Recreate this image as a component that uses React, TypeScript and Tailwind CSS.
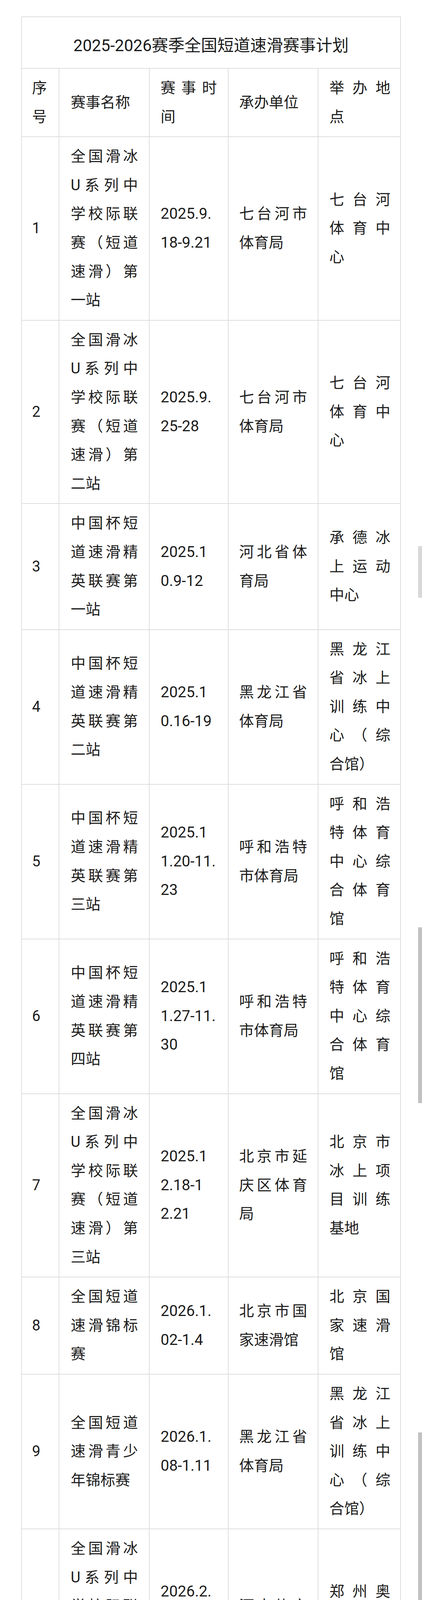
type Row = {
  no: string[];
  name: string[];
  date: string[];
  host: string[];
  place: string[];
};

const rows: Row[] = [
  {
    no: ["1"],
    name: ["全国滑冰", "U系列中", "学校际联", "赛（短道", "速滑）第", "一站"],
    date: ["2025.9.", "18-9.21"],
    host: ["七台河市", "体育局"],
    place: ["七台河", "体育中", "心"],
  },
  {
    no: ["2"],
    name: ["全国滑冰", "U系列中", "学校际联", "赛（短道", "速滑）第", "二站"],
    date: ["2025.9.", "25-28"],
    host: ["七台河市", "体育局"],
    place: ["七台河", "体育中", "心"],
  },
  {
    no: ["3"],
    name: ["中国杯短", "道速滑精", "英联赛第", "一站"],
    date: ["2025.1", "0.9-12"],
    host: ["河北省体", "育局"],
    place: ["承德冰", "上运动", "中心"],
  },
  {
    no: ["4"],
    name: ["中国杯短", "道速滑精", "英联赛第", "二站"],
    date: ["2025.1", "0.16-19"],
    host: ["黑龙江省", "体育局"],
    place: ["黑龙江", "省冰上", "训练中", "心（综", "合馆）"],
  },
  {
    no: ["5"],
    name: ["中国杯短", "道速滑精", "英联赛第", "三站"],
    date: ["2025.1", "1.20-11.", "23"],
    host: ["呼和浩特", "市体育局"],
    place: ["呼和浩", "特体育", "中心综", "合体育", "馆"],
  },
  {
    no: ["6"],
    name: ["中国杯短", "道速滑精", "英联赛第", "四站"],
    date: ["2025.1", "1.27-11.", "30"],
    host: ["呼和浩特", "市体育局"],
    place: ["呼和浩", "特体育", "中心综", "合体育", "馆"],
  },
  {
    no: ["7"],
    name: ["全国滑冰", "U系列中", "学校际联", "赛（短道", "速滑）第", "三站"],
    date: ["2025.1", "2.18-1", "2.21"],
    host: ["北京市延", "庆区体育", "局"],
    place: ["北京市", "冰上项", "目训练", "基地"],
  },
  {
    no: ["8"],
    name: ["全国短道", "速滑锦标", "赛"],
    date: ["2026.1.", "02-1.4"],
    host: ["北京市国", "家速滑馆"],
    place: ["北京国", "家速滑", "馆"],
  },
  {
    no: ["9"],
    name: ["全国短道", "速滑青少", "年锦标赛"],
    date: ["2026.1.", "08-1.11"],
    host: ["黑龙江省", "体育局"],
    place: ["黑龙江", "省冰上", "训练中", "心（综", "合馆）"],
  },
  {
    no: ["1", "0"],
    name: ["全国滑冰", "U系列中", "学校际联", "赛（短道", "速滑）第", "四站"],
    date: ["2026.2.", "05-2.0", "8"],
    host: ["河南体育", "学院"],
    place: ["郑州奥", "体中心", "滑冰馆"],
  },
  {
    no: ["11"],
    name: ["全国短道", "速滑冠军", "赛"],
    date: ["2026.3.", "20-3.22"],
    host: ["呼和浩特", "市体育局"],
    place: ["呼和浩", "特体育", "中心综", "合体育", "馆"],
  },
];

// every line but the last is spread over the cell width, like justified CJK text
function Lines({ lines, spread = true }: { lines: string[]; spread?: boolean }) {
  return (
    <>
      {lines.map((line, i) =>
        spread && i < lines.length - 1 ? (
          <div key={i} className="flex justify-between">
            {Array.from(line).map((ch, j) => (
              <span key={j}>{ch}</span>
            ))}
          </div>
        ) : (
          <div key={i} className="whitespace-nowrap">
            {line}
          </div>
        ),
      )}
    </>
  );
}

const cell =
  "border-r-2 border-b-2 border-[#dedede] py-[13px] align-middle text-left leading-[73.6px] text-[38px] font-normal";

export default function App() {
  return (
    <div className="relative h-[4814px] overflow-hidden bg-white text-[#1c1c1c] font-['Roboto','Noto_Sans_CJK_SC',sans-serif]">
      <table className="ml-[54px] mt-[42px] w-[970px] table-fixed border-separate border-spacing-0 border-l-2 border-t-2 border-[#dedede]">
        <colgroup>
          <col className="w-[96px]" />
          <col className="w-[231px]" />
          <col className="w-[202px]" />
          <col className="w-[230px]" />
          <col className="w-[211px]" />
        </colgroup>
        <thead>
          <tr>
            <th
              colSpan={5}
              className="border-r-2 border-b-2 border-[#dedede] pt-[43px] pb-[27px] text-center text-[42px] leading-[60px] font-normal"
            >
              2025-2026赛季全国短道速滑赛事计划
            </th>
          </tr>
          <tr>
            <th className={`${cell} pl-[26px] pr-[2px]`}>
              <Lines lines={["序", "号"]} />
            </th>
            <th className={`${cell} pl-[29px] pr-[28px]`}>
              <Lines lines={["赛事名称"]} />
            </th>
            <th className={`${cell} px-[28px]`}>
              <Lines lines={["赛事时", "间"]} />
            </th>
            <th className={`${cell} px-[27px]`}>
              <Lines lines={["承办单位"]} />
            </th>
            <th className={`${cell} pl-[28px] pr-[25px]`}>
              <Lines lines={["举办地", "点"]} />
            </th>
          </tr>
        </thead>
        <tbody>
          {rows.map((r, i) => (
            <tr key={i}>
              <td className={`${cell} pl-[26px] pr-[2px]`}>
                <Lines lines={r.no} spread={false} />
              </td>
              <td className={`${cell} pl-[29px] pr-[28px]`}>
                <Lines lines={r.name} />
              </td>
              <td className={`${cell} px-[28px] text-[39px]`}>
                <Lines lines={r.date} spread={false} />
              </td>
              <td className={`${cell} px-[27px]`}>
                <Lines lines={r.host} />
              </td>
              <td className={`${cell} pl-[28px] pr-[25px]`}>
                <Lines lines={r.place} />
              </td>
            </tr>
          ))}
          <tr>
            <td colSpan={5} className="h-[30px] border-r-2 border-[#dedede]" />
          </tr>
        </tbody>
      </table>

      {/* scrollbar thumbs left in the stitched screenshot */}
      <div className="absolute left-[1070px] top-[1398px] h-[132px] w-[10px] bg-[#d8d8d8]" />
      <div className="absolute left-[1070px] top-[2374px] h-[450px] w-[10px] bg-[#c2c2c2]" />
      <div className="absolute left-[1070px] top-[3667px] h-[449px] w-[10px] bg-[#c2c2c2]" />

      {/* faint watermark */}
      <div className="absolute left-[446px] top-[4786px] flex items-center gap-[14px] opacity-70 blur-[1px]">
        <div className="h-[26px] w-[26px] rounded-full bg-gradient-to-b from-[#e4e4e4] to-[#b8b8b8]" />
        <span className="text-[26px] leading-[28px] text-[#c8c8c8]">@短道速滑</span>
      </div>
    </div>
  );
}
